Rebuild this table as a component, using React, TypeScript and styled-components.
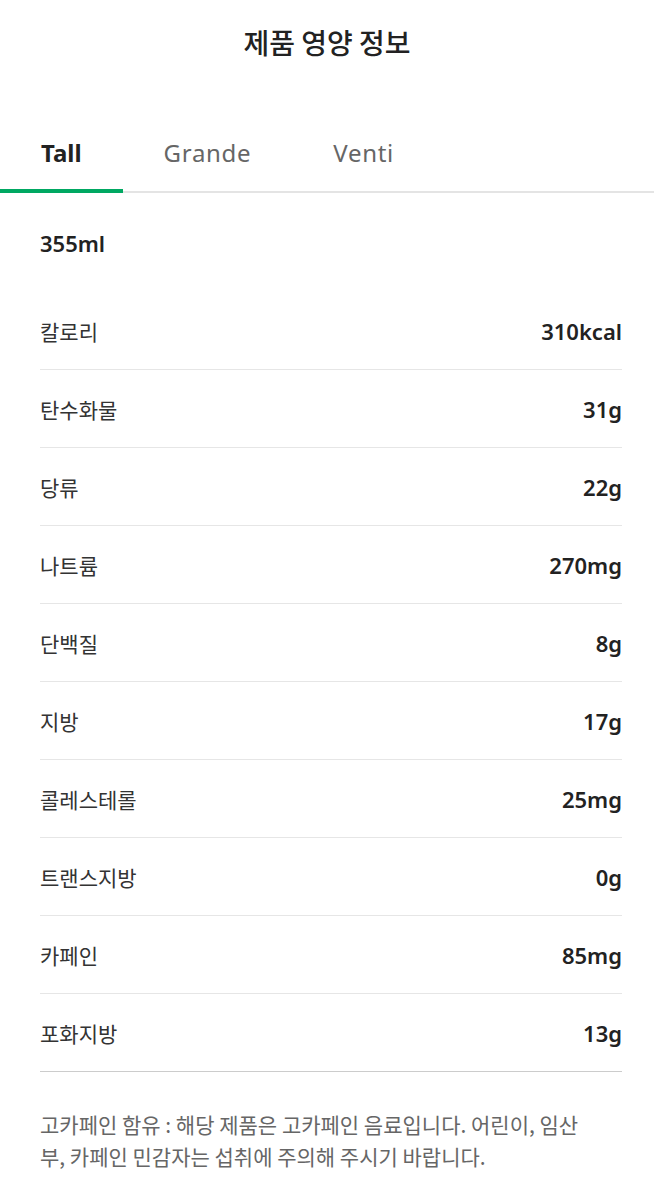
import React, { useState } from 'react'
import styled, { createGlobalStyle } from 'styled-components'

const GlobalStyle = createGlobalStyle`
    body {
        margin: 0;
        background: #fff;
        font-family: "Noto Sans CJK KR", "Noto Sans", sans-serif;
        color: #222;
    }
`

const Page = styled.div`
    width: 654px;
    min-height: 1195px;
    background: #fff;
`

const Title = styled.h1`
    margin: 0;
    height: 84px;
    display: flex;
    align-items: center;
    justify-content: center;
    font-size: 28px;
    font-weight: 500;
    color: #222;
`

const Tabs = styled.div`
    display: flex;
    margin-top: 34px;
    border-bottom: 2px solid #e4e4e4;
`

const Tab = styled.button<{ $active: boolean }>`
    position: relative;
    background: none;
    border: 0;
    padding: 0 41px 4px;
    height: 73px;
    font-family: "Noto Sans", sans-serif;
    font-size: 24px;
    font-weight: ${p => (p.$active ? 700 : 400)};
    color: ${p => (p.$active ? '#222' : '#666')};
    letter-spacing: ${p => (p.$active ? '0' : '0.7px')};
    cursor: pointer;
    &::after {
        content: '';
        display: ${p => (p.$active ? 'block' : 'none')};
        position: absolute;
        left: 0;
        right: 0;
        bottom: -2px;
        height: 4px;
        background: #00a862;
    }
`

const Body = styled.div`
    padding: 0 32px 0 40px;
`

const Size = styled.div`
    height: 99px;
    display: flex;
    align-items: center;
    font-family: "Noto Sans", sans-serif;
    font-size: 22px;
    font-weight: 600;
    color: #222;
`

const Row = styled.div<{ $last?: boolean }>`
    height: 77px;
    display: flex;
    align-items: center;
    justify-content: space-between;
    border-bottom: 1px solid ${p => (p.$last ? '#ccc' : '#e6e6e6')};
`

const Label = styled.span`
    font-size: 21px;
    color: #333;
`

const Value = styled.span`
    font-family: "Noto Sans", sans-serif;
    font-size: 22px;
    font-weight: 600;
    color: #222;
`

const Notice = styled.p`
    margin: 36px 0 0;
    padding-right: 20px;
    font-size: 21px;
    line-height: 32px;
    color: #666;
    word-break: break-all;
`

const sizes = ['Tall', 'Grande', 'Venti']

const nutrition = [
    ['칼로리', '310kcal'],
    ['탄수화물', '31g'],
    ['당류', '22g'],
    ['나트륨', '270mg'],
    ['단백질', '8g'],
    ['지방', '17g'],
    ['콜레스테롤', '25mg'],
    ['트랜스지방', '0g'],
    ['카페인', '85mg'],
    ['포화지방', '13g']
]

export default () => {
    const [active, setActive] = useState('Tall')

    return (
        <Page>
            <GlobalStyle />
            <Title>제품 영양 정보</Title>
            <Tabs>
                {sizes.map(s => (
                    <Tab key={s} $active={s === active} onClick={() => setActive(s)}>{s}</Tab>
                ))}
            </Tabs>
            <Body>
                <Size>355ml</Size>
                {nutrition.map(([label, value], i) => (
                    <Row key={label} $last={i === nutrition.length - 1}>
                        <Label>{label}</Label>
                        <Value>{value}</Value>
                    </Row>
                ))}
                <Notice>고카페인 함유 : 해당 제품은 고카페인 음료입니다. 어린이, 임산부, 카페인 민감자는 섭취에 주의해 주시기 바랍니다.</Notice>
            </Body>
        </Page>
    )
}
